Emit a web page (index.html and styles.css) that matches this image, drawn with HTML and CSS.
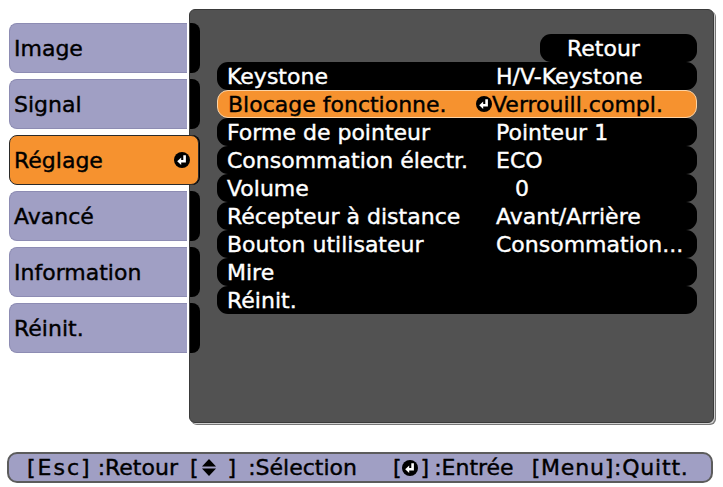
FILE: index.html
```html
<!DOCTYPE html>
<html lang="fr">

<head>
    <meta charset="UTF-8">
    <meta name="viewport" content="width=device-width, initial-scale=1.0">
    <title>Réglage</title>
    <link rel="stylesheet" href="styles.css">
</head>

<body>
    <div class="screen">
        <!-- onglets de gauche -->
        <div class="tabs">
            <div class="tab">Image</div>
            <div class="tab">Signal</div>
            <div class="tab active">
                Réglage
                <svg class="enter" viewBox="0 0 16 16">
                    <circle cx="8" cy="8" r="8" fill="#000"/>
                    <path d="M10.6 3.2 V9.2 H6" stroke="#fff" stroke-width="2.6" fill="none"/>
                    <path d="M7.2 5.4 L3.2 9.2 L7.2 13 Z" fill="#fff"/>
                </svg>
            </div>
            <div class="tab">Avancé</div>
            <div class="tab">Information</div>
            <div class="tab">Réinit.</div>
        </div>
        <!-- panneau du menu -->
        <div class="panel">
            <div class="notches">
                <span></span><span></span><span></span><span></span><span></span><span></span>
            </div>
            <div class="menu">
                <div class="row back"><span class="pill">Retour</span></div>
                <div class="row item"><span class="label">Keystone</span><span class="value">H/V-Keystone</span></div>
                <div class="row item selected">
                    <span class="label">Blocage fonctionne.</span>
                    <span class="value">
                        <svg class="enter" viewBox="0 0 16 16">
                            <circle cx="8" cy="8" r="8" fill="#000"/>
                            <path d="M10.6 3.2 V9.2 H6" stroke="#fff" stroke-width="2.6" fill="none"/>
                            <path d="M7.2 5.4 L3.2 9.2 L7.2 13 Z" fill="#fff"/>
                        </svg>Verrouill.compl.
                    </span>
                </div>
                <div class="row item"><span class="label">Forme de pointeur</span><span class="value">Pointeur 1</span></div>
                <div class="row item"><span class="label">Consommation électr.</span><span class="value">ECO</span></div>
                <div class="row item"><span class="label">Volume</span><span class="value num">0</span></div>
                <div class="row item"><span class="label">Récepteur à distance</span><span class="value">Avant/Arrière</span></div>
                <div class="row item"><span class="label">Bouton utilisateur</span><span class="value">Consommation...</span></div>
                <div class="row item"><span class="label">Mire</span></div>
                <div class="row item"><span class="label">Réinit.</span></div>
            </div>
        </div>
    </div>
    <!-- barre d'aide -->
    <div class="help">
        <span class="key esc">[Esc]</span><span class="act retour">:Retour</span>
        <span class="key sel">[<svg class="updown" viewBox="0 0 14 17">
            <path d="M7 0 L14 7.5 H0 Z" fill="#000"/>
            <path d="M0 9.5 H14 L7 17 Z" fill="#000"/>
        </svg>]</span><span class="act selection">:Sélection</span>
        <span class="key ent">[<svg class="enter" viewBox="0 0 16 16">
            <circle cx="8" cy="8" r="8" fill="#000"/>
            <path d="M10.6 3.2 V9.2 H6" stroke="#fff" stroke-width="2.6" fill="none"/>
            <path d="M7.2 5.4 L3.2 9.2 L7.2 13 Z" fill="#fff"/>
        </svg>]</span><span class="act entree">:Entrée</span>
        <span class="key quitt">[Menu]:Quitt.</span>
    </div>
</body>

</html>
```

FILE: styles.css
```css
body {
    margin: 0;
    background-color: #fff;
    font-family: "DejaVu Sans", "Liberation Sans", sans-serif;
    font-size: 22px;
    -webkit-text-stroke: 0.4px currentColor;
    color: #000;
}

.screen {
    display: flex;
    align-items: flex-start;
    padding: 9px 0 0 9px;
}

/* onglets */
.tabs {
    display: flex;
    flex-direction: column;
    gap: 6px;
    width: 178px;
    margin-top: 14px;
}

.tab {
    display: flex;
    align-items: center;
    justify-content: space-between;
    box-sizing: border-box;
    height: 50px;
    padding: 0 8px 0 4px;
    background-color: #a09fc4;
    border: 1px solid #8d8cb3;
    border-right: none;
    border-radius: 8px 0 0 8px;
}

.tab.active {
    position: relative;
    z-index: 1;
    width: 190px;
    margin-right: -12px;
    background-color: #f6922f;
    border: 1px solid #2a2a2a;
    border-radius: 8px;
}

.enter {
    display: block;
    flex-shrink: 0;
    width: 16px;
    height: 16px;
}

/* panneau */
.panel {
    display: flex;
    box-sizing: border-box;
    width: 525px;
    height: 414px;
    margin-left: 2px;
    background-color: #525252;
    border: 1px solid #3a3a3a;
    border-radius: 6px;
    box-shadow: 1px 1px 0 #cfcfcf, 2px 2px 0 #777;
}

.notches {
    display: flex;
    flex-direction: column;
    gap: 6px;
    width: 10px;
    margin-top: 13px;
}

.notches span {
    height: 50px;
    background-color: #000;
    border-radius: 0 8px 8px 0;
}

.menu {
    width: 480px;
    margin: 24px 0 0 17px;
}

.row {
    display: flex;
    align-items: center;
    height: 28px;
    color: #fff;
    white-space: nowrap;
}

.item {
    background-color: #000;
    border-radius: 11px;
    padding-left: 10px;
}

.row .label {
    width: 269px;
}

.row .value {
    display: flex;
    align-items: center;
}

.row .num {
    padding-left: 19px;
}

.back .pill {
    display: flex;
    align-items: center;
    box-sizing: border-box;
    width: 157px;
    height: 28px;
    margin-left: auto;
    padding-left: 27px;
    background-color: #000;
    border-radius: 11px;
}

.row.selected {
    box-sizing: border-box;
    background-color: #f6922f;
    border: 1px solid #fbd3a6;
    color: #000;
}

.row.selected .label {
    width: 248px;
}

/* barre d'aide */
.help {
    display: flex;
    align-items: center;
    box-sizing: border-box;
    width: 706px;
    height: 31px;
    margin: 29px 0 0 7px;
    padding-left: 18px;
    background-color: #a09fc4;
    border: 2px solid #5c5c5c;
    border-radius: 10px;
    white-space: nowrap;
}

.help .key {
    display: flex;
    align-items: center;
}

.help .esc {
    letter-spacing: 2px;
}

.help .quitt {
    letter-spacing: 0.8px;
}

.updown {
    width: 14px;
    height: 17px;
    margin: 0 12px 0 3px;
}

.help .ent .enter {
    margin: 0 3px 0 0;
}

.help .retour {
    margin: 0 12px 0 6px;
}

.help .selection {
    margin: 0 36px 0 12px;
}

.help .entree {
    margin: 0 18px 0 5px;
}
```
